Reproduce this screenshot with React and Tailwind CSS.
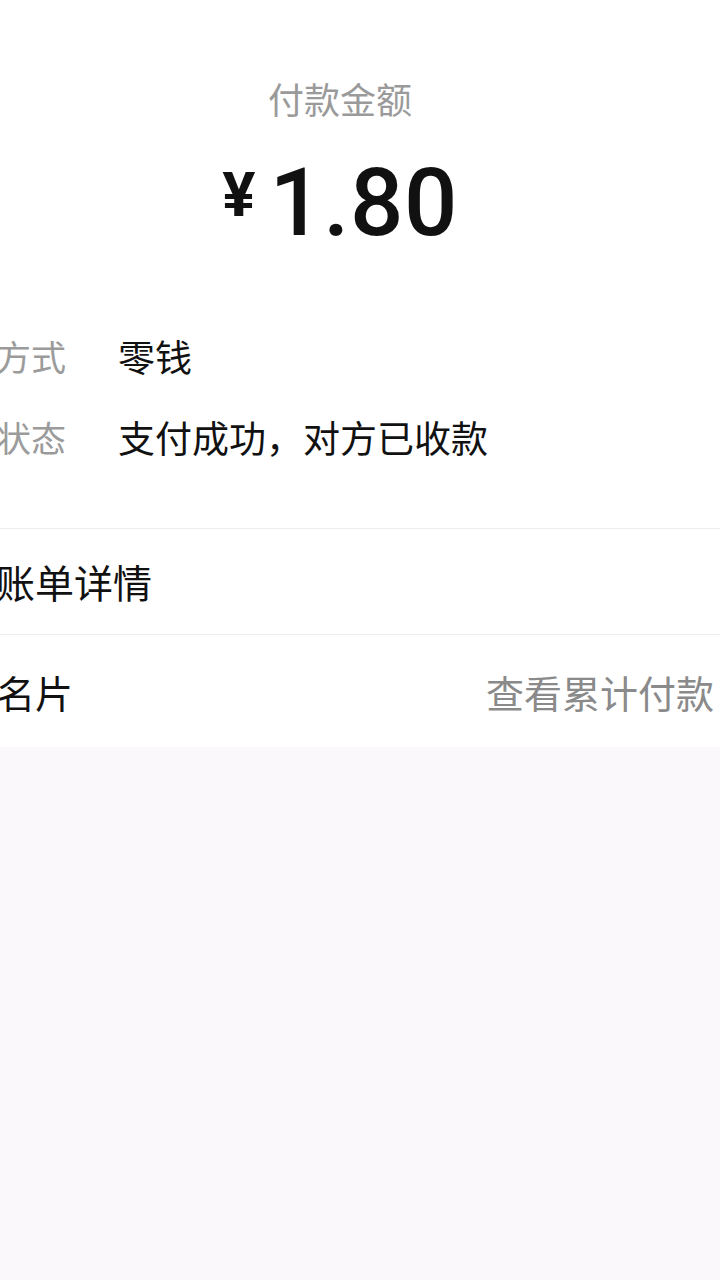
import React from 'react';

const cjk = { fontFamily: '"Noto Sans CJK SC", "Noto Sans", sans-serif' };

function InfoRow({ label, value }) {
    return (
        <div className="flex items-center h-[81px] ml-[-74px]">
            <span className="w-[192px] shrink-0 text-[35px] text-[#9b9b9b]">{label}</span>
            <span className="text-[37px] text-[#111]">{value}</span>
        </div>
    );
}

export default function App() {
    return (
        <div className="w-[720px] min-h-[1280px] overflow-hidden bg-[#fbf8fc] flex flex-col" style={cjk}>
            <div className="bg-white">
                {/* amount header */}
                <div className="pt-[74px] pr-[40px] flex flex-col items-center">
                    <div className="text-[36px] leading-[48px] text-[#9a9a9a]">付款金额</div>
                    <div className="mt-[34px] flex items-start h-[100px]">
                        <span className="text-[62px] leading-none font-bold text-[#111] mt-[8px] mr-[14px] [font-family:Roboto,sans-serif]">¥</span>
                        <span className="text-[94px] leading-none font-medium text-[#111] tracking-[0.5px] [font-family:Roboto,sans-serif]">1.80</span>
                    </div>
                </div>

                {/* payment info */}
                <div className="mt-[60px] pb-[50px]">
                    <InfoRow label="支付方式" value="零钱" />
                    <InfoRow label="当前状态" value="支付成功，对方已收款" />
                </div>

                <div className="h-[106px] border-t border-[#ededed] flex items-center">
                    <span className="ml-[-4px] text-[39px] text-[#111]">账单详情</span>
                </div>

                <div className="h-[113px] border-t border-[#ededed] flex items-center justify-between pr-[6px]">
                    <span className="ml-[-3px] text-[38px] text-[#111]">名片</span>
                    <span className="text-[38px] text-[#8a8a8a]">查看累计付款</span>
                </div>
            </div>
            <div className="flex-1 bg-[#fbf8fc]" />
        </div>
    );
}
